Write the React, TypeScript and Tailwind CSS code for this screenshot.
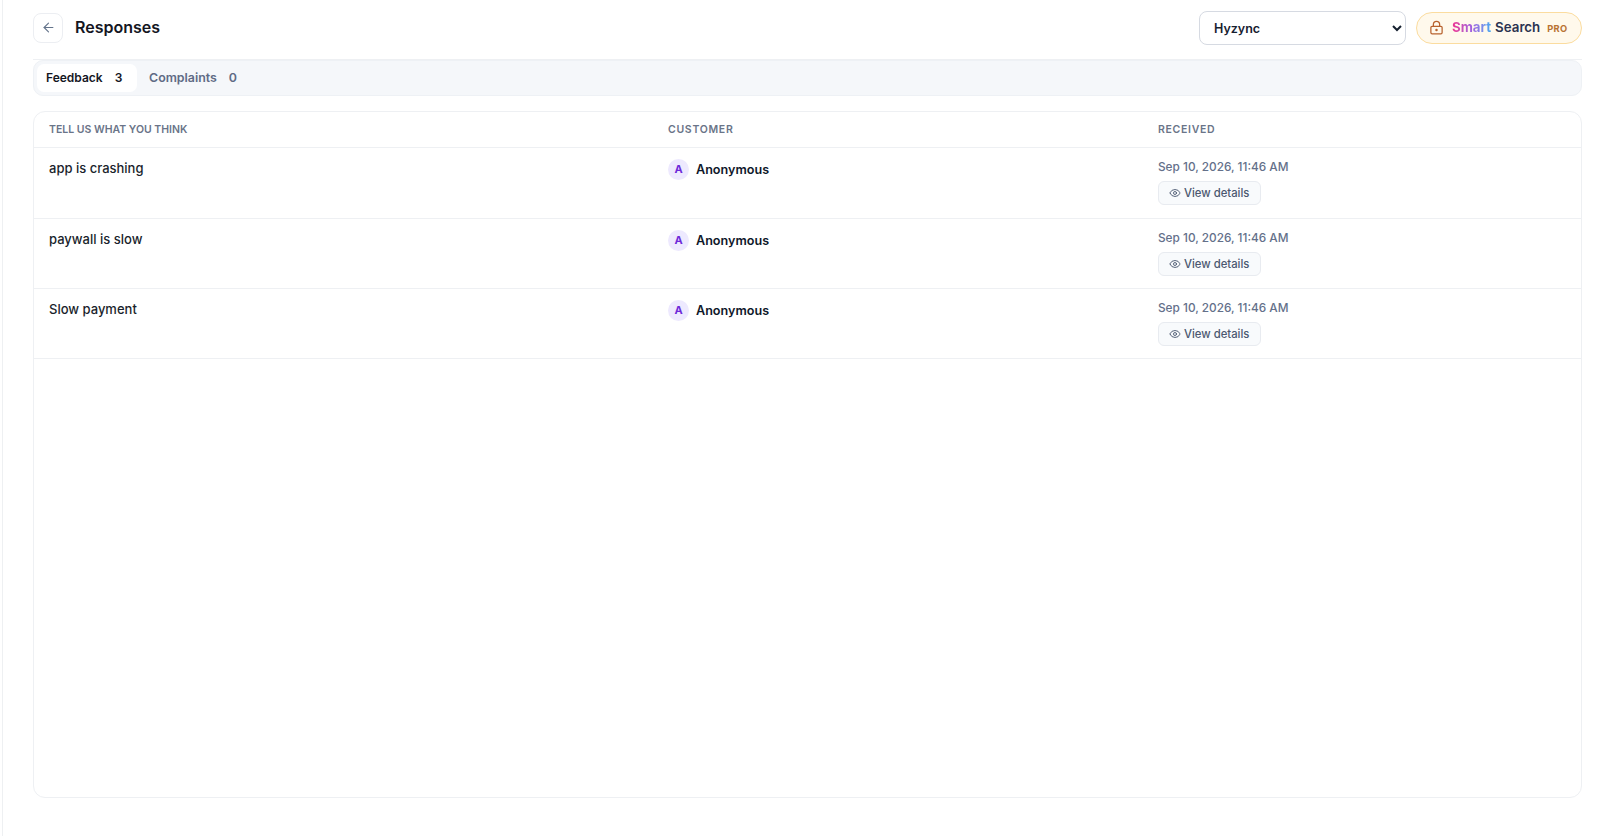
import { ArrowLeft, Eye, LockKeyhole } from "lucide-react";

const rows = [
  { text: "app is crashing" },
  { text: "paywall is slow" },
  { text: "Slow payment" },
];

function Row({ text }: { text: string }) {
  return (
    <div className="grid grid-cols-[619px_490px_1fr] h-[70px] first:h-[71px] pl-[15px] border-b border-[#eef0f3]">
      <div className="pt-[10px] text-[13px] leading-[20px] font-medium text-[#1a1f2c]">{text}</div>
      <div className="pt-[11px] flex items-start gap-[7px]">
        <div className="w-[21px] h-[21px] rounded-full bg-[#ede9fe] flex items-center justify-center text-[11px] font-bold text-[#6d28d9]">
          A
        </div>
        <span className="text-[12.6px] leading-[21px] font-semibold text-[#0f172a]">Anonymous</span>
      </div>
      <div className="pt-[9px]">
        <div className="text-[11.8px] leading-[20px] font-medium text-[#64708a]">Sep 10, 2026, 11:46 AM</div>
        <button className="mt-[4px] flex items-center gap-[3px] h-[24px] w-[103px] pl-[10px] rounded-[6px] border border-[#e8ebf0] bg-[#f8fafc] text-[11.3px] font-medium text-[#4b5870]">
          <Eye size={12} strokeWidth={1.8} />
          View details
        </button>
      </div>
    </div>
  );
}

export default function App() {
  return (
    <div className="h-[836px] bg-white pl-[2px] font-['Inter',sans-serif]">
      <div className="h-full border-l border-[#eef0f2] pl-[30px] pr-[18px]">
        <header className="h-[60px] flex items-center justify-between border-b border-[#eef0f3]">
          <div className="flex items-center gap-[12px] pb-[4px]">
            <button className="w-[30px] h-[30px] rounded-[8px] border border-[#eceef2] bg-white flex items-center justify-center text-[#64748b]">
              <ArrowLeft size={15} strokeWidth={1.8} />
            </button>
            <h1 className="text-[16px] leading-[22px] pb-[2px] font-semibold text-[#14161f]">Responses</h1>
          </div>
          <div className="flex items-center gap-[10px] pb-[4px]">
            <select className="w-[207px] h-[34px] rounded-[8px] border border-[#d6dae2] bg-white pl-[10px] pt-[1px] text-[12.5px] font-semibold text-[#16202f]">
              <option>Hyzync</option>
            </select>
            <div className="w-[166px] h-[32px] rounded-full border border-[#fbdc9f] bg-[#fff9ec] flex items-center pl-[12px] text-[13.3px] font-semibold">
              <LockKeyhole size={15} strokeWidth={2} className="text-[#b8622e]" />
              <span className="ml-[8px] font-bold bg-gradient-to-r from-[#f0288f] via-[#a060e0] to-[#3fa8f0] bg-clip-text text-transparent">
                Smart
              </span>
              <span className="ml-[4px] text-[#2b3350]">Search</span>
              <span className="ml-[7px] mt-[2px] text-[9.3px] font-bold tracking-[0.3px] text-[#b87333]">PRO</span>
            </div>
          </div>
        </header>

        <div className="h-[36px] rounded-[10px] border border-[#eef1f5] bg-[#f5f7fa] flex items-center pl-[3px] text-[12px] font-semibold">
          <div className="w-[100px] h-[28px] rounded-[7px] bg-white flex items-center pl-[9px] text-[#14161f]">
            Feedback
            <span className="ml-[12px]">3</span>
          </div>
          <div className="ml-[12px] flex items-center text-[12.4px] text-[#5f6b85]">
            Complaints
            <span className="ml-[12px]">0</span>
          </div>
        </div>

        <div className="mt-[15px] h-[687px] rounded-[12px] border border-[#eef0f3]">
          <div className="grid grid-cols-[619px_490px_1fr] h-[36px] pl-[15px] items-center border-b border-[#eef0f3] text-[10.5px] font-semibold uppercase text-[#6a7488]">
            <div>Tell us what you think</div>
            <div className="tracking-[0.7px]">Customer</div>
            <div className="tracking-[0.7px]">Received</div>
          </div>
          <div>
            {rows.map((row, i) => (
              <Row key={i} text={row.text} />
            ))}
          </div>
        </div>
      </div>
    </div>
  );
}
